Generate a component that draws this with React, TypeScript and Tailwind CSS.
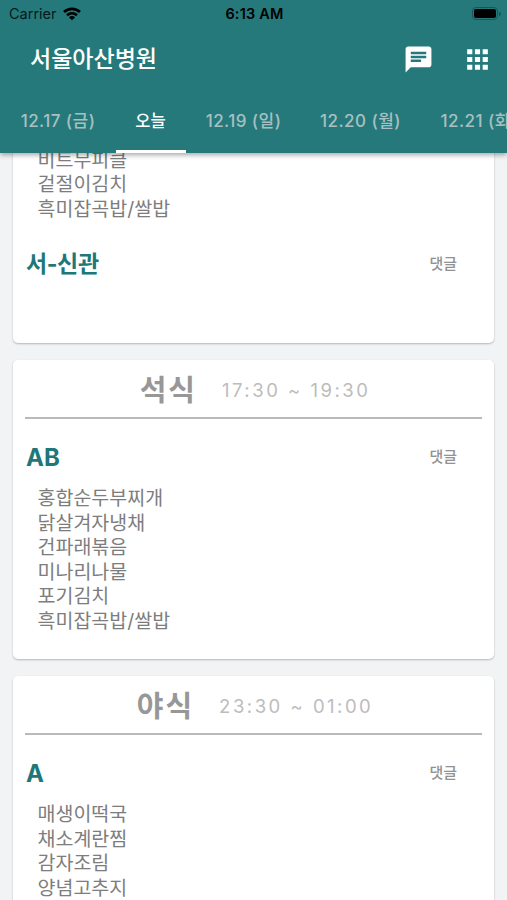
import React from "react";
import { MdApps, MdChat } from "react-icons/md";

const days = [
  { label: "12.17 (금)", width: "w-[116px]" },
  { label: "오늘", width: "w-[70px]", active: true },
  { label: "12.19 (일)", width: "w-[115px]" },
  { label: "12.20 (월)", width: "w-[119px]" },
  { label: "12.21 (화)", width: "w-[118px]" },
];

function StatusBar() {
  return (
    <div className="grid h-7 grid-cols-3 items-center pr-[6px] pl-[9px]">
      <div className="flex items-center gap-[6px]">
        <span className="text-[14.5px] leading-none text-[#06191a]">Carrier</span>
        <svg viewBox="0 0 18 14" className="-mt-px h-[14px] w-[18px]" fill="none" stroke="#000" strokeWidth="2.7">
          <path d="M1 5.1C5.5.8 12.5.8 17 5.1" />
          <path d="M4 8.3c2.9-2.6 7.1-2.6 10 0" />
          <path d="M9 13.3 5.9 10.2c1.8-1.5 4.4-1.5 6.2 0z" fill="#000" stroke="none" />
        </svg>
      </div>
      <span className="pr-px text-center text-[14.5px] leading-none font-semibold tracking-[0.2px] text-black">6:13 AM</span>
      <div className="-mt-px flex items-center justify-end gap-px">
        <div className="h-[13px] w-[26px] rounded-[4px] border border-[#1a5557] p-px">
          <div className="h-full rounded-[2px] bg-black" />
        </div>
        <div className="h-1 w-[2px] rounded-r-full bg-[#1a5557]" />
      </div>
    </div>
  );
}

function Header() {
  return (
    <header className="relative z-10 flex h-[152.5px] shrink-0 flex-col bg-[#25797b] shadow-[0_2px_5px_rgba(0,0,0,0.35)]">
      <StatusBar />
      <div className="flex h-[62px] items-center pl-[30px] text-white">
        <h1 className="flex-1 text-[23px] leading-none font-medium">서울아산병원</h1>
        <MdChat className="mr-[28px] size-[31px]" />
        <MdApps className="mr-[14px] size-[31px]" />
      </div>
      <nav className="flex flex-1 overflow-hidden">
        {days.map((day) => (
          <div
            key={day.label}
            className={`flex shrink-0 items-center justify-center border-b-[3px] pt-[3px] font-medium whitespace-nowrap ${day.width} ${
              day.active ? "border-white pr-px text-[16.5px] text-white" : "border-transparent text-[17px] tracking-[0.45px] text-[#a8c0c1]"
            }`}
          >
            {day.label}
          </div>
        ))}
      </nav>
    </header>
  );
}

function Card({ className, children }: { className: string; children: React.ReactNode }) {
  return (
    <section className={`mx-[13px] shrink-0 rounded-[5px] bg-white shadow-[0_1px_2px_rgba(0,0,0,0.25)] ${className}`}>
      {children}
    </section>
  );
}

function MealTitle({ name, time }: { name: string; time: string }) {
  return (
    <div className="mx-3 flex h-[59px] items-center justify-center gap-[25px] border-b-2 border-[#b9b9b9] pt-[3px] pl-[3px]">
      <h2 className="text-[29px] leading-none font-bold tracking-[2px] text-[#979797]">{name}</h2>
      <span className="pt-px text-[18.5px] leading-none tracking-[2.5px] text-[#bcbcbc]">{time}</span>
    </div>
  );
}

function Course({ name, size = "text-[24px]" }: { name: string; size?: string }) {
  return (
    <div className="flex items-center justify-between pr-[37px] pl-[13px]">
      <h3 className={`pt-px leading-[30px] font-bold text-[#207779] ${size}`}>{name}</h3>
      <span className="text-[15px] font-medium text-[#929292]">댓글</span>
    </div>
  );
}

function Menu({ items }: { items: string[] }) {
  return (
    <ul className="pl-[24.5px] text-[19.5px] leading-[24.6px] text-[#7d7d7d]">
      {items.map((item) => (
        <li key={item}>{item}</li>
      ))}
    </ul>
  );
}

export default function App() {
  return (
    <div className="flex h-[900px] w-[507px] flex-col overflow-hidden bg-[#f1f3f5] font-['Inter','Noto_Sans_CJK_KR',sans-serif]">
      <Header />
      <main className="flex min-h-0 flex-1 flex-col gap-[17px] overflow-hidden">
        <Card className="-mt-[5px] h-[195.5px]">
          <Menu items={["비트무피클", "겉절이김치", "흑미잡곡밥/쌀밥"]} />
          <div className="mt-[27px]">
            <Course name="서-신관" size="text-[23px] tracking-[-0.4px]" />
          </div>
        </Card>
        <Card className="h-[299px]">
          <MealTitle name="석식" time="17:30 ~ 19:30" />
          <div className="mt-[23px] mb-[13px]">
            <Course name="AB" />
          </div>
          <Menu items={["홍합순두부찌개", "닭살겨자냉채", "건파래볶음", "미나리나물", "포기김치", "흑미잡곡밥/쌀밥"]} />
        </Card>
        <Card className="h-[299px]">
          <MealTitle name="야식" time="23:30 ~ 01:00" />
          <div className="mt-[23px] mb-[13px]">
            <Course name="A" />
          </div>
          <Menu items={["매생이떡국", "채소계란찜", "감자조림", "양념고추지"]} />
        </Card>
      </main>
    </div>
  );
}
